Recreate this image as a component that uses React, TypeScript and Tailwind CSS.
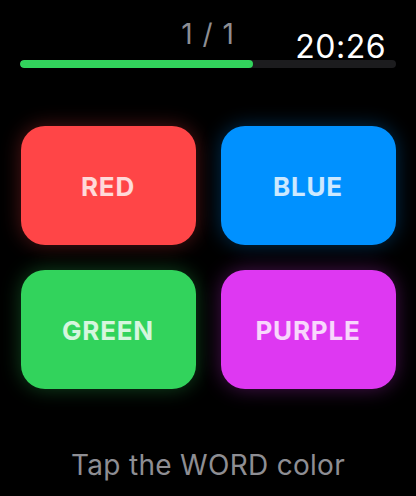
const choices = [
  { label: "RED", bg: "bg-[#ff4547]", glow: "shadow-[0_0_20px_rgba(255,69,71,0.32)]" },
  { label: "BLUE", bg: "bg-[#0091ff]", glow: "shadow-[0_0_20px_rgba(0,145,255,0.32)]" },
  { label: "GREEN", bg: "bg-[#32d35c]", glow: "shadow-[0_0_20px_rgba(50,211,92,0.32)]" },
  { label: "PURPLE", bg: "bg-[#de38f2]", glow: "shadow-[0_0_20px_rgba(222,56,242,0.32)]" },
];

export default function App() {
  return (
    <div className="relative w-[416px] h-[496px] bg-black overflow-hidden font-['Inter','Liberation_Sans',sans-serif]">
      {/* watch clock */}
      <span className="absolute right-[30px] top-[31px] text-[32px] leading-none text-white tracking-[0.5px]">20:26</span>

      <div className="flex flex-col items-center pt-[18px]">
        <span className="text-[28px] leading-[32px] text-[#8e8e93] tracking-[1px]">1 / 1</span>

        {/* progress */}
        <div className="mt-[10px] w-[376px] h-[8px] rounded-full bg-[#1c1c1e] overflow-hidden">
          <div className="h-full w-[62%] rounded-full bg-[#32d35c]" />
        </div>

        <div className="mt-[58px] grid grid-cols-2 gap-[25px]">
          {choices.map((c) => (
            <button
              key={c.label}
              className={`w-[175px] h-[119px] rounded-[24px] flex items-center justify-center ${c.bg} ${c.glow}`}
            >
              <span className="mt-[2px] text-[26px] font-bold text-white/80 tracking-[0.8px]">{c.label}</span>
            </button>
          ))}
        </div>

        <span className="mt-[60px] text-[28px] leading-[32px] text-[#8e8e93] tracking-[0.3px]">Tap the WORD color</span>
      </div>
    </div>
  );
}
